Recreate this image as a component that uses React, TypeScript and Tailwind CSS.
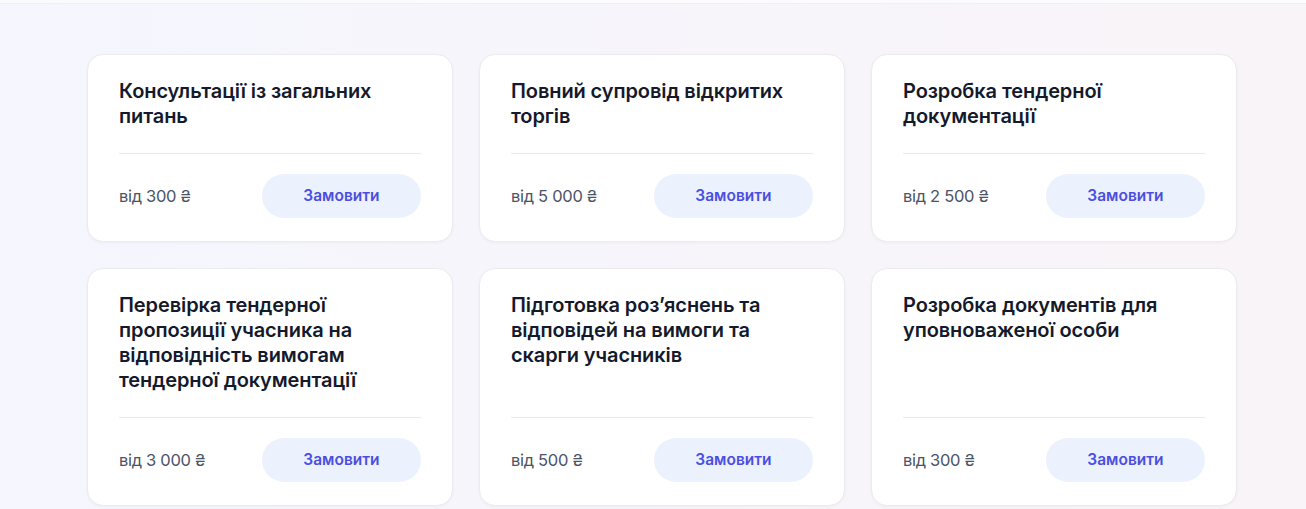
import React from "react";

const items = [
  { title: "Консультації із загальних питань", price: "від 300 ₴" },
  { title: "Повний супровід відкритих торгів", price: "від 5 000 ₴" },
  { title: "Розробка тендерної документації", price: "від 2 500 ₴" },
  { title: "Перевірка тендерної пропозиції учасника на відповідність вимогам тендерної документації", price: "від 3 000 ₴" },
  { title: "Підготовка роз’яснень та відповідей на вимоги та скарги учасників", price: "від 500 ₴" },
  { title: "Розробка документів для уповноваженої особи", price: "від 300 ₴" },
];

export default function App() {
  return (
    <div
      className="min-h-[509px] w-full bg-gradient-to-r from-[#f5f6fe] to-[#f9f4f8]"
      style={{ fontFamily: "Inter, 'Noto Sans', sans-serif" }}
    >
      <div className="h-[4px] border-b border-[#f0f0f4] bg-[#fbfbfd]" />
      <div className="pl-[87px] pt-[50px]">
        <div className="grid w-[1150px] grid-cols-3 gap-[26px]">
          {items.map((it, i) => (
            <div
              key={i}
              className="flex flex-col rounded-[16px] border border-[#ebebf0] bg-white px-[31px] pt-[24px] pb-[23px] shadow-[0_1px_3px_rgba(20,20,60,0.04)]"
            >
              <h3 className="flex-1 pb-[24px] text-[20px] font-semibold leading-[25px] tracking-[-0.1px] text-[#141a2b]">
                {it.title}
              </h3>
              <div className="h-px bg-[#e8e9ee]" />
              <div className="mt-[20px] flex items-center justify-between">
                <span className="text-[16.5px] tracking-[-0.3px] text-[#4b5366]">{it.price}</span>
                <button className="h-[44px] w-[159px] rounded-full bg-[#ecf1fe] text-[15.5px] font-semibold text-[#4a4ee0]">
                  Замовити
                </button>
              </div>
            </div>
          ))}
        </div>
      </div>
    </div>
  );
}
